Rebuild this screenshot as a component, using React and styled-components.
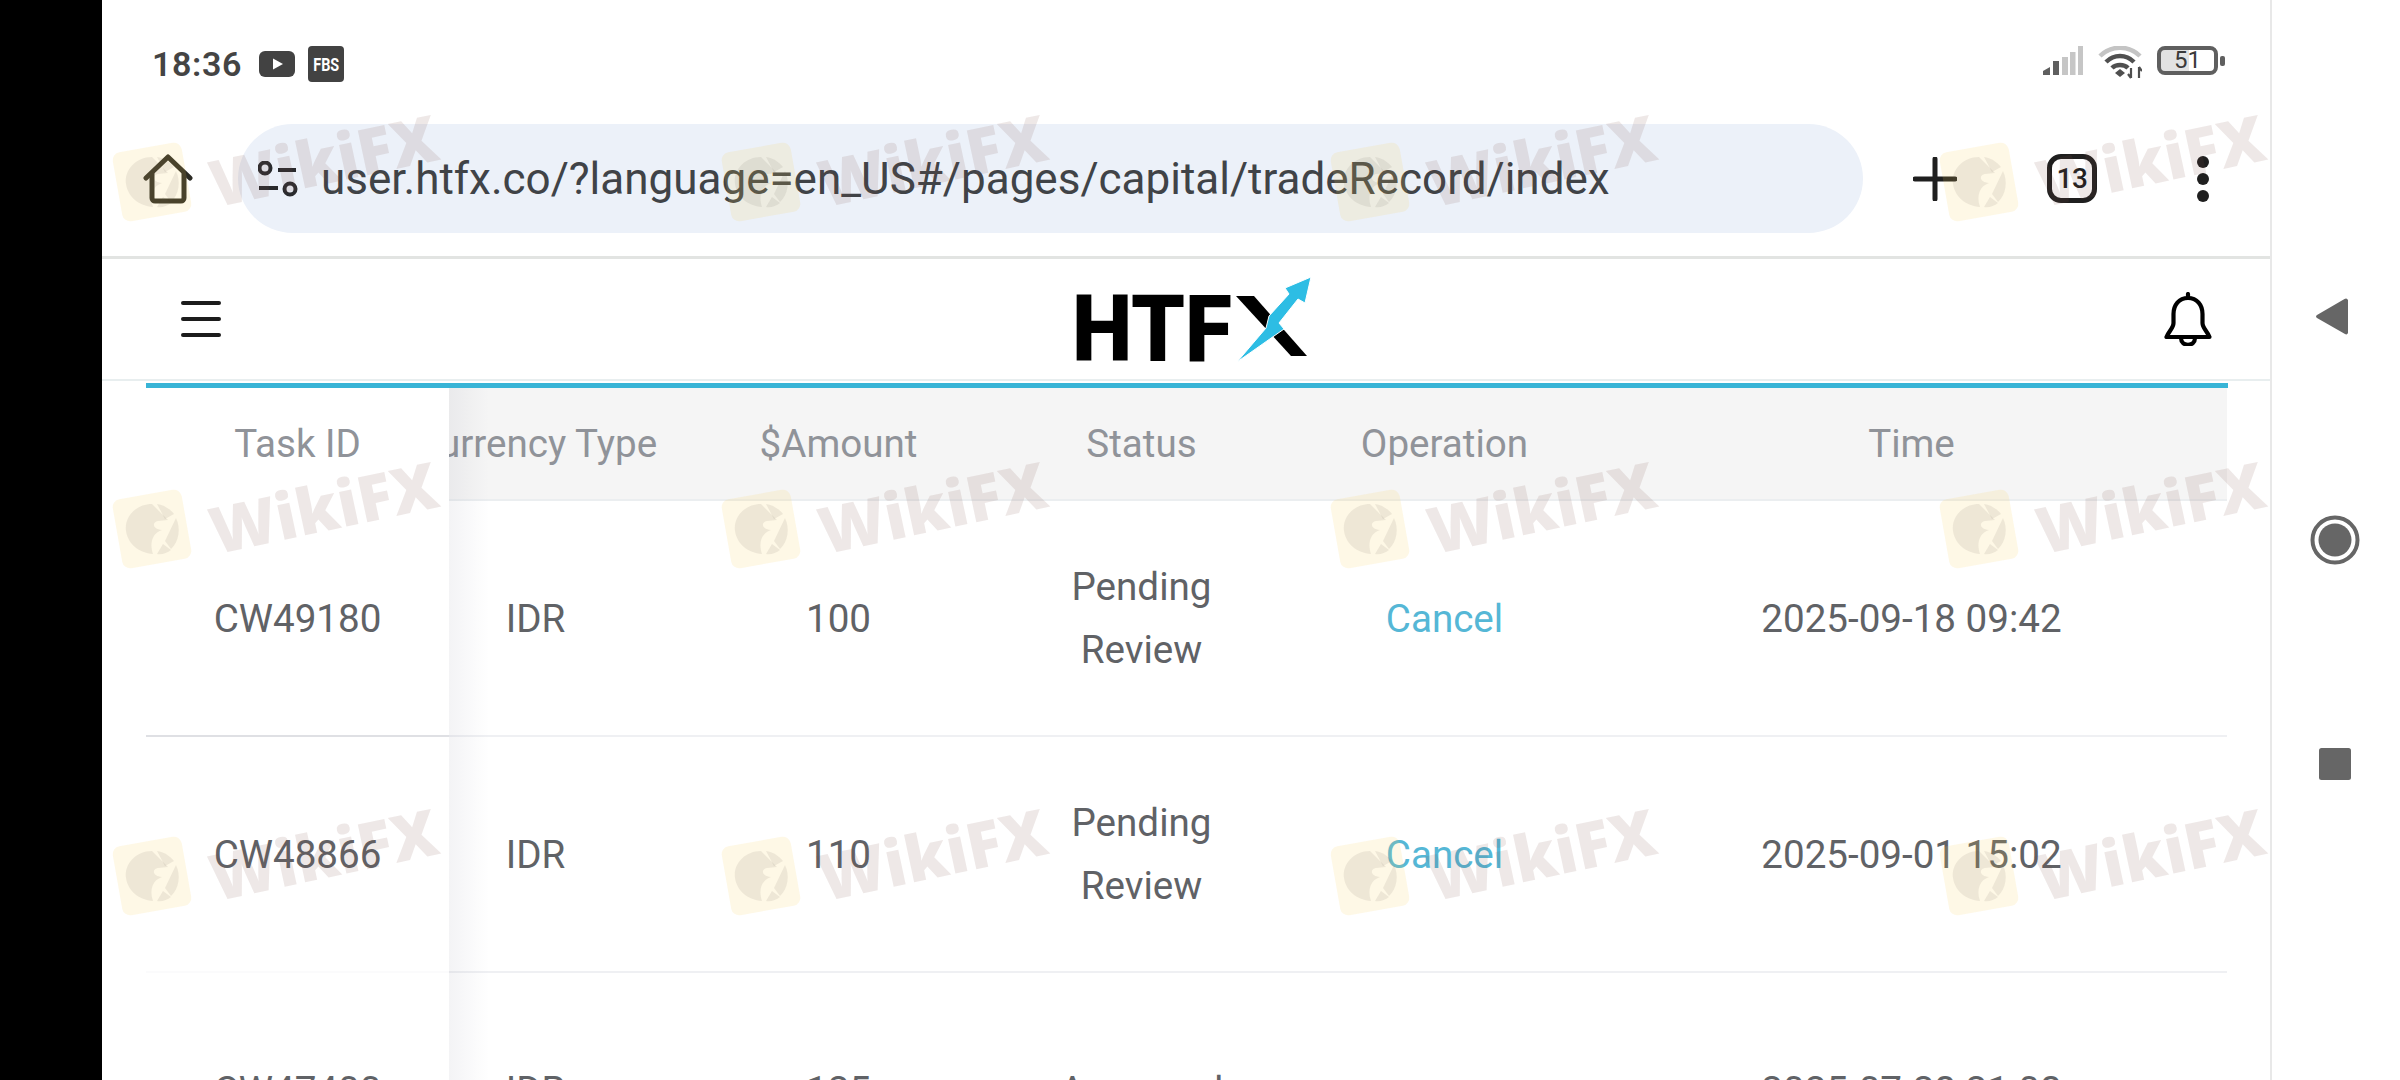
import React from "react";
import styled, { createGlobalStyle } from "styled-components";

const GlobalStyle = createGlobalStyle`
  html, body {
    margin: 0;
    padding: 0;
    background: #000;
    font-family: Roboto, "Liberation Sans", sans-serif;
  }
`;

const Page = styled.div`
  position: relative;
  display: flex;
  width: 2400px;
  height: 1080px;
  overflow: hidden;
  background: #000;
`;

const Phone = styled.div`
  width: 2168px;
  margin-left: 102px;
  background: #fff;
  display: flex;
  flex-direction: column;
`;

const NavGutter = styled.div`
  width: 130px;
  background: #fff;
  border-left: 2px solid #e8e8e8;
  box-sizing: border-box;
  display: flex;
  flex-direction: column;
  align-items: center;
  padding: 298px 2px 0 0;
  svg {
    display: block;
    fill: #666;
  }
`;

const NavSlot = styled.div`
  height: ${(p) => p.$h}px;
  margin-left: ${(p) => p.$ml || 0}px;
  display: flex;
  justify-content: center;
`;

const StatusBar = styled.div`
  height: 124px;
  box-sizing: border-box;
  padding: 4px 45px 0 50px;
  display: flex;
  align-items: center;
  justify-content: space-between;
`;

const StatusLeft = styled.div`
  display: flex;
  align-items: center;
`;

const Clock = styled.span`
  font-size: 34px;
  font-weight: 600;
  color: #444;
  margin-right: 17px;
  letter-spacing: 0.6px;
`;

const FbsBadge = styled.span`
  width: 36px;
  height: 36px;
  margin-left: 13px;
  border-radius: 4px;
  background: #424242;
  color: #fff;
  font-size: 18px;
  font-weight: 700;
  display: flex;
  align-items: center;
  justify-content: center;
  span {
    transform: scaleX(0.8);
  }
`;

const StatusRight = styled.div`
  display: flex;
  align-items: flex-start;
  gap: 15px;
  margin-top: -4px;
`;

const Battery = styled.div`
  position: relative;
  width: 61px;
  height: 29px;
  margin-right: 7px;
  box-sizing: border-box;
  border: 4px solid #5f5f5f;
  border-radius: 8px;
  display: flex;
  align-items: center;
  justify-content: center;
  background: linear-gradient(to right, #e2e2e2 0 52%, #fff 52%);
  background-clip: padding-box;
  color: #3a3a3a;
  font-size: 24px;
  line-height: 1;
  &::after {
    content: "";
    position: absolute;
    right: -11px;
    top: 6px;
    width: 5px;
    height: 10px;
    border-radius: 2px;
    background: #5f5f5f;
  }
`;

const Toolbar = styled.div`
  height: 132px;
  box-sizing: border-box;
  padding: 0 0 23px 41px;
  display: flex;
  align-items: center;
  border-bottom: 3px solid #e2e4e2;
  flex: 0 0 135px;
`;

const UrlBar = styled.div`
  width: 1625px;
  height: 109px;
  margin-left: 45px;
  padding-left: 20px;
  box-sizing: border-box;
  border-radius: 55px;
  background: #ecf1f9;
  display: flex;
  align-items: center;
  gap: 23px;
`;

const UrlText = styled.span`
  font-size: 44px;
  color: #404347;
  white-space: nowrap;
`;

const PlusIcon = styled.svg`
  margin-left: 50px;
`;

const TabCount = styled.div`
  width: 50px;
  height: 49px;
  margin-left: 90px;
  box-sizing: border-box;
  border: 5px solid #1f1f1f;
  border-radius: 14px;
  display: flex;
  align-items: center;
  justify-content: center;
  font-size: 28px;
  font-weight: 500;
  letter-spacing: -0.5px;
  color: #1f1f1f;
`;

const Dots = styled.div`
  margin-left: 100px;
  display: flex;
  flex-direction: column;
  gap: 5px;
  span {
    width: 12px;
    height: 12px;
    border-radius: 50%;
    background: #1f1f1f;
  }
`;

const SiteHeader = styled.div`
  height: 122px;
  flex: 0 0 122px;
  box-sizing: border-box;
  padding: 0 58px 0 79px;
  border-bottom: 2px solid #e8eeef;
  display: flex;
  align-items: center;
  justify-content: space-between;
`;

const Burger = styled.div`
  width: 40px;
  display: flex;
  flex-direction: column;
  gap: 12px;
  span {
    height: 4px;
    border-radius: 2px;
    background: #1c1c1c;
  }
`;

const TableWrap = styled.div`
  margin: 2px 42px 0 44px;
  border-top: 5px solid #38b4d6;
  display: flex;
  flex: 1;
  min-height: 0;
`;

const FixedColumn = styled.div`
  position: relative;
  z-index: 1;
  width: 303px;
  flex: 0 0 303px;
  background: #fff;
  &::after {
    content: "";
    position: absolute;
    top: 0;
    bottom: 0;
    left: 100%;
    width: 40px;
    background: linear-gradient(to right, rgba(60, 60, 90, 0.06), rgba(60, 60, 90, 0));
  }
`;

const ScrollPane = styled.div`
  flex: 1;
  min-width: 0;
  overflow: hidden;
`;

const ScrollTable = styled.div`
  margin-left: -65px;
  width: 1843px;
`;

const Row = styled.div`
  display: grid;
  grid-template-columns: 303px 303px 303px 303px 631px;
`;

const HeadCell = styled.div`
  height: 113px;
  box-sizing: border-box;
  display: flex;
  align-items: center;
  justify-content: center;
  white-space: nowrap;
  font-size: 38.6px;
  color: #909399;
  background: ${(p) => (p.$fixed ? "#fff" : "#f5f5f5")};
  border-bottom: 2px solid ${(p) => (p.$fixed ? "#fff" : "#ebeef0")};
`;

const Cell = styled.div`
  height: 236px;
  box-sizing: border-box;
  padding: 0 40px;
  display: flex;
  align-items: center;
  justify-content: center;
  text-align: center;
  font-size: 38.6px;
  line-height: 63px;
  color: ${(p) => (p.$link ? "#55b7d6" : "#606266")};
  border-bottom: 2px solid ${(p) => p.$line || "#eff0f3"};
`;

const WatermarkLayer = styled.div`
  position: absolute;
  z-index: 5;
  left: 110px;
  top: 140px;
  display: grid;
  grid-template-columns: repeat(4, 609px);
  grid-auto-rows: 347px;
  pointer-events: none;
`;

const WatermarkTile = styled.div`
  display: flex;
  align-items: flex-start;
  height: 90px;
`;

const WatermarkText = styled.span`
  margin-left: 14px;
  font-family: "Open Sans", sans-serif;
  font-size: 64px;
  font-weight: 800;
  line-height: 90px;
  color: rgba(120, 80, 70, 0.13);
  transform: translateY(-25px) rotate(-12deg);
  white-space: nowrap;
`;

const records = [
  { id: "CW49180", type: "IDR", amount: "100", status: "Pending Review", cancel: true, time: "2025-09-18 09:42", line: "#dfe0e4" },
  { id: "CW48866", type: "IDR", amount: "110", status: "Pending Review", cancel: true, time: "2025-09-01 15:02", line: "#fbfbfc" },
  { id: "CW47400", type: "IDR", amount: "125", status: "Approved", cancel: false, time: "2025-07-28 21:08", line: "#fff" },
];

const heads = ["Task ID", "Currency Type", "$Amount", "Status", "Operation", "Time"];

const HomeIcon = () => (
  <svg width="50" height="50" viewBox="0 0 50 50" fill="none" stroke="#2b2a24" strokeWidth="5" strokeLinecap="round" strokeLinejoin="round">
    <path d="M3 24 25 3l22 21" />
    <path d="M9 20v24a3 3 0 0 0 3 3h26a3 3 0 0 0 3-3V20" />
  </svg>
);

const TuneIcon = () => (
  <svg width="40" height="36" viewBox="0 0 40 36" fill="none" stroke="#2a2b2e" strokeWidth="4">
    <circle cx="7" cy="7" r="5.5" />
    <path d="M20 9h18" />
    <path d="M1 27h19" />
    <circle cx="32" cy="28" r="5.5" />
  </svg>
);

const YoutubeIcon = () => (
  <svg width="36" height="26" viewBox="0 0 36 26">
    <rect width="36" height="26" rx="6" fill="#424242" />
    <path d="M14 7.5 24 13l-10 5.5z" fill="#fff" />
  </svg>
);

const SignalIcon = () => (
  <svg width="40" height="29" viewBox="0 0 40 29">
    <path d="M0 29v-4l7-4v8z" fill="#5f5f5f" />
    <rect x="10" y="15" width="6" height="14" fill="#5f5f5f" />
    <rect x="19" y="11" width="6" height="18" fill="#c6c6c6" />
    <rect x="27" y="6" width="5.5" height="23" fill="#c6c6c6" />
    <rect x="35" y="0" width="5" height="29" fill="#c6c6c6" />
  </svg>
);

const WifiIcon = () => (
  <svg width="44" height="33" viewBox="0 0 44 33" fill="none" strokeWidth="4.5">
    <path d="M2 10C13 -1 31 -1 42 10" stroke="#c4c4c4" />
    <path d="M8 16c8-8 20-8 28 0" stroke="#4f4f4f" />
    <path d="M14 22c4-4 12-4 16 0" stroke="#4f4f4f" />
    <path d="m22 23 5 4-5 4-5-4z" fill="#4f4f4f" stroke="none" />
    <path d="M33 22v10M33 32l-3-4M41 21v11M41 21l3 4" stroke="#4f4f4f" strokeWidth="2.2" />
  </svg>
);

const BellIcon = () => (
  <svg width="48" height="54" viewBox="0 0 48 54" fill="none" stroke="#000" strokeWidth="4.2" strokeLinejoin="round" strokeLinecap="round">
    <path d="M24 2v4" />
    <path d="M24 6C15 6 9.5 13 9.5 22v9C9.5 36 5 39 2.5 45h43C43 39 38.500 36 38.500 31v-9C38.500 13 33 6 24 6Z" />
    <path d="M17 46c0 9 14 9 14 0" />
  </svg>
);

// logo: the letters stay text, the arrow and the slanted stroke are the drawn mark
const Logo = () => (
  <svg width="236" height="85" viewBox="0 0 236 85" role="img" aria-label="HTFX">
    <text
      x="-3"
      y="84"
      fontFamily="Roboto, sans-serif"
      fontWeight="900"
      fontSize="93"
      textLength="160"
      lengthAdjust="spacingAndGlyphs"
      fill="#000"
    >
      HTF
    </text>
    <path d="M161 19h18l53 60h-16z" fill="#000" />
    <path
      d="M236 0 210 11l4 6-20 22-3 12-29 34 47-33-5-6 19-24 7 4z"
      fill="#2dbde4"
      stroke="#fff"
      strokeWidth="1"
    />
  </svg>
);

const WatermarkLogo = () => (
  <svg width="84" height="84" viewBox="0 0 84 84" style={{ flex: "0 0 84px" }}>
    <rect x="7" y="7" width="70" height="70" rx="8" fill="rgba(245,205,90,0.15)" transform="rotate(-10 42 42)" />
    <g fill="rgba(100,90,80,0.1)">
      <path d="M16 44C14 30 26 17 42 17l16 16-10 1c-6 1-6 8 4 9-9 3-13 12-9 24-14-1-25-10-27-23Z" />
      <path d="M47 17c7 1 13 5 17 10l-9 5z" />
      <path d="M66 31c5 10 3 24-5 31l-6-8z" />
      <path d="M47 67l6-10 8 6c-4 3-9 5-14 4Z" />
    </g>
  </svg>
);

const App = () => {
  return (
    <Page>
      <GlobalStyle />
      <Phone>
        <StatusBar>
          <StatusLeft>
            <Clock>18:36</Clock>
            <YoutubeIcon />
            <FbsBadge>
              <span>FBS</span>
            </FbsBadge>
          </StatusLeft>
          <StatusRight>
            <SignalIcon />
            <WifiIcon />
            <Battery>51</Battery>
          </StatusRight>
        </StatusBar>

        <Toolbar>
          <HomeIcon />
          <UrlBar>
            <TuneIcon />
            <UrlText>user.htfx.co/?language=en_US#/pages/capital/tradeRecord/index</UrlText>
          </UrlBar>
          <PlusIcon width="44" height="44" viewBox="0 0 44 44" fill="none" stroke="#1f1f1f" strokeWidth="5" strokeLinecap="round">
            <path d="M22 2v40M2 22h40" />
          </PlusIcon>
          <TabCount>13</TabCount>
          <Dots>
            <span />
            <span />
            <span />
          </Dots>
        </Toolbar>

        <SiteHeader>
          <Burger>
            <span />
            <span />
            <span />
          </Burger>
          <Logo />
          <BellIcon />
        </SiteHeader>

        <TableWrap>
          <FixedColumn>
            <HeadCell $fixed>{heads[0]}</HeadCell>
            {records.map((r) => (
              <Cell key={r.id} $line={r.line}>
                {r.id}
              </Cell>
            ))}
          </FixedColumn>
          <ScrollPane>
            <ScrollTable>
              <Row>
                {heads.slice(1).map((h) => (
                  <HeadCell key={h}>{h}</HeadCell>
                ))}
              </Row>
              {records.map((r) => (
                <Row key={r.id}>
                  <Cell>{r.type}</Cell>
                  <Cell>{r.amount}</Cell>
                  <Cell>{r.status}</Cell>
                  <Cell $link>{r.cancel ? "Cancel" : ""}</Cell>
                  <Cell>{r.time}</Cell>
                </Row>
              ))}
            </ScrollTable>
          </ScrollPane>
        </TableWrap>
      </Phone>

      <NavGutter>
        <NavSlot $h={217} $ml={-7}>
          <svg width="32" height="37" viewBox="0 0 32 37">
            <path d="M30 0.500c1 0 2 1 2 2v32c0 1.500-1.500 2.500-3 1.500L1 20c-1.300-.8-1.300-2.200 0-3L28.500 1c.5-.3 1-.5 1.500-.5Z" />
          </svg>
        </NavSlot>
        <NavSlot $h={233}>
          <svg width="50" height="50" viewBox="0 0 50 50">
            <circle cx="25" cy="25" r="22.500" fill="none" stroke="#666" strokeWidth="4" />
            <circle cx="25" cy="25" r="16.500" />
          </svg>
        </NavSlot>
        <NavSlot $h={32}>
          <svg width="32" height="32" viewBox="0 0 32 32">
            <rect width="32" height="32" rx="2.500" />
          </svg>
        </NavSlot>
      </NavGutter>

      <WatermarkLayer>
        {Array.from({ length: 12 }).map((_, i) => (
          <WatermarkTile key={i}>
            <WatermarkLogo />
            <WatermarkText>WikiFX</WatermarkText>
          </WatermarkTile>
        ))}
      </WatermarkLayer>
    </Page>
  );
};

export default App;
